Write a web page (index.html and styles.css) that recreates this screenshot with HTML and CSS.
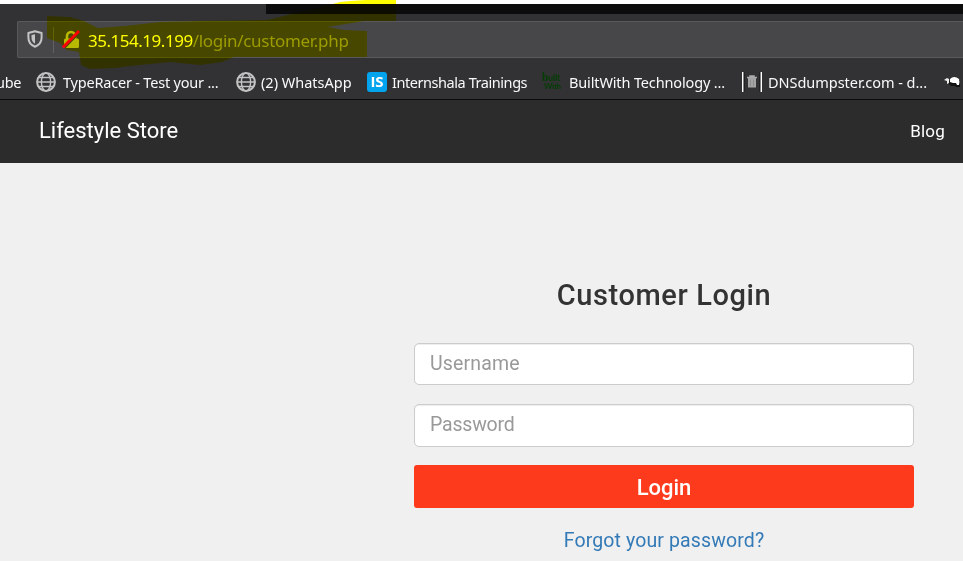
FILE: index.html
```html
<!DOCTYPE html>
<html lang="en">
<head>
<meta charset="utf-8">
<title>Lifestyle Store</title>
<link rel="stylesheet" href="styles.css">
</head>
<body>
<header class="browser">
  <div class="tabstrip"></div>
  <div class="address">
    <svg class="shield" width="16" height="18" viewBox="0 0 16 18"><path d="M8 1.200 14.600 3v4.500c0 4.300-2.300 7.500-6.600 9.200C3.700 15 1.400 11.800 1.400 7.500V3Z" fill="none" stroke="#c4c4c5" stroke-width="2" stroke-linejoin="round"/><path d="M8 4.200v9.500C5.500 12.200 4.500 10.200 4.500 7.500V5Z" fill="#c4c4c5"/></svg>
    <span class="divider"></span>
    <svg class="lock" width="19" height="19" viewBox="0 0 19 19"><path d="M5 9V6a4 4 0 0 1 8 0V9" fill="none" stroke="#b8b8b8" stroke-width="2.600"/><rect x="2" y="8.500" width="15" height="9.500" rx="1.500" fill="#b8b8b8"/><path d="M1.800 18.500 18 2" stroke="#47474a" stroke-width="2"/><path d="M.8 17.500 17 1" stroke="#ff0022" stroke-width="2.800"/></svg>
    <span class="url"><span class="host">35.154.19.199</span><span class="path">/login/customer.php</span></span>
  </div>
  <nav class="bookmarks">
    <span class="bm"><span class="label cut">ube</span></span>
    <span class="bm"><svg class="ico" width="20" height="20" viewBox="0 0 20 20"><g fill="none" stroke="#c4c4c5" stroke-width="1.400"><circle cx="10" cy="10" r="8.900" stroke-width="2"/><ellipse cx="10" cy="10" rx="4.600" ry="8.900"/><path d="M1 10h18M3 5.500h14M3 14.500h14"/></g></svg><span class="label racer">TypeRacer - Test your ...</span></span>
    <span class="bm"><svg class="ico" width="20" height="20" viewBox="0 0 20 20"><g fill="none" stroke="#c4c4c5" stroke-width="1.400"><circle cx="10" cy="10" r="8.900" stroke-width="2"/><ellipse cx="10" cy="10" rx="4.600" ry="8.900"/><path d="M1 10h18M3 5.500h14M3 14.500h14"/></g></svg><span class="label whats">(2) WhatsApp</span></span>
    <span class="bm"><span class="ico is">IS</span><span class="label intern">Internshala Trainings</span></span>
    <span class="bm"><span class="ico built"><span class="top">built</span><span class="with">With</span></span><span class="label tech">BuiltWith Technology ...</span></span>
    <span class="bm"><svg class="ico" width="20" height="20" viewBox="0 0 20 20"><path d="M.7 0v20M19.300 0v20" stroke="#fff" stroke-width="1.400"/><path d="M2.500 0v20M17.500 0v20" stroke="#222" stroke-width="1"/><path d="M5 5.500h10M8 5V4h4v1" stroke="#aaa" stroke-width="1.500" fill="none"/><path d="M6 6h8v9.500H6Z" fill="#a4a4a4"/><path d="M8.500 8v6M11.500 8v6" stroke="#888" stroke-width=".8"/></svg><span class="label dns">DNSdumpster.com - d...</span></span>
    <span class="bm"><svg class="ico" width="18" height="20" viewBox="0 0 18 20"><path d="M6 8h10v7h-4l-1-1H7l-3-3Z" fill="#111"/><path d="M6 7q4-4 9 0 1 3 0 6h-2l-1-2H9l-3-1Z" fill="#fff"/><path d="M0 8 3 6l2 1v4l-2 1V9Z" fill="#eee"/></svg></span>
  </nav>
  <svg class="marker" width="400" height="72" viewBox="0 0 400 72"><path d="M47 16 70 17 84 21 98 28 125 26 160 22 203 21 267 20 300 12 333 4 340 2 350 1 366 0H396V21H364L346 24 328 27 344 30 367 31V57H245L234 57 222 62 200 65 170 62 150 64 130 66 115 68 90 69 81 65 79 52 67 50 60 43 47 38Z" fill="#ff0"/></svg>
</header>
<div class="navbar"><span class="brand">Lifestyle Store</span><span class="blog">Blog</span></div>
<main>
  <form class="login">
    <h1><span>Customer Login</span></h1>
    <div class="field"><span class="user">Username</span></div>
    <div class="field second"><span class="pass">Password</span></div>
    <div class="button"><span>Login</span></div>
    <a class="forgot">Forgot your password?</a>
  </form>
</main>
</body>
</html>
```

FILE: styles.css
```css
* { box-sizing: border-box; }
body { margin: 0; width: 963px; height: 561px; overflow: hidden; background: #f0f0f0; font-family: Roboto, "Liberation Sans", sans-serif; }
span, a { white-space: nowrap; }
.browser { position: relative; height: 100px; padding-top: 4px; background: linear-gradient(#fff 0 4px, #323234 4px); border-bottom: 1px solid #0c0c0d; font-family: "Noto Sans", "Open Sans", sans-serif; }
.tabstrip { height: 10px; margin-left: 266px; background: #0c0c0d; }
.address { display: flex; align-items: center; height: 37px; margin: 7px 0 0 17px; padding-left: 9px; border: 1px solid #59595b; border-right: 0; border-radius: 2px 0 0 2px; background: #474749; }
.shield { margin-top: -1px; }
.divider { width: 1px; height: 26px; margin: 0 9px 0 10px; background: #626265; }
.lock { margin-left: -1px; }
.url { margin: 2px 0 0 7px; font-size: 17px; line-height: 24px; letter-spacing: -.3px; color: #b1b1b3; }
.host { color: #fff; letter-spacing: -.48px; }
.path { color: #9c9c9e; }
.bookmarks { display: grid; grid-template-columns: 36px 200px 131px 175px 200px 202px 19px; height: 41px; padding-top: 14px; }
.bm { display: flex; height: 20px; }
.ico { flex: none; }
.label { margin-left: 7px; font-size: 14.5px; line-height: 20px; color: #f9f9fa; letter-spacing: -.3px; }
.cut { margin-left: -4px; }
.racer { letter-spacing: -.2px; }
.whats { margin-left: 5px; letter-spacing: 0; }
.intern { margin-left: 5px; letter-spacing: -.44px; }
.tech { letter-spacing: -.14px; }
.dns { margin-left: 6px; letter-spacing: -.04px; }
.is { width: 20px; height: 20px; border-radius: 3px; background: #03a3ed; color: #fff; font: bold 15px/19px "Open Sans", sans-serif; text-align: center; }
.built { display: flex; flex-direction: column; width: 20px; color: #063d06; font: 900 8.5px/9px Lato, sans-serif; }
.top { display: block; height: 9px; letter-spacing: -.1px; }
.top::first-letter { font-size: 11px; }
.with { margin-top: 1px; font-size: 8px; line-height: 9px; padding-left: 2px; letter-spacing: -.3px; }
.marker { position: absolute; left: 0; top: 0; mix-blend-mode: multiply; }
.navbar { display: flex; justify-content: space-between; height: 63px; padding: 0 18px 0 39px; background: #2c2c2c; color: #fff; line-height: 62px; }
.brand { font-size: 22px; }
.blog { font-size: 17px; letter-spacing: .2px; }
.login { display: flex; flex-direction: column; width: 500px; margin: 114px 0 0 414px; }
h1 { margin: 0 0 30px; height: 36px; font-size: 29px; line-height: 36px; font-weight: 500; letter-spacing: .6px; text-align: center; color: #333; }
.field { height: 42px; padding: 0 15px; border: 1px solid #ccc; border-radius: 5px; background: #fff; box-shadow: inset 0 1px 1px rgba(0,0,0,.075); color: #999; font-size: 19.5px; font-weight: 400; line-height: 39px; }
.user { letter-spacing: .15px; }
.pass { letter-spacing: -.2px; }
.second { height: 43px; margin-top: 19px; }
.button { height: 43px; margin-top: 18px; border-radius: 3px; background: #fd3a1c; color: #fff; font-size: 22px; font-weight: 500; line-height: 45px; text-align: center; }
.forgot { margin-top: 20px; font-size: 19.5px; font-weight: 400; line-height: 26px; letter-spacing: .12px; text-align: center; color: #337ab7; }
```
